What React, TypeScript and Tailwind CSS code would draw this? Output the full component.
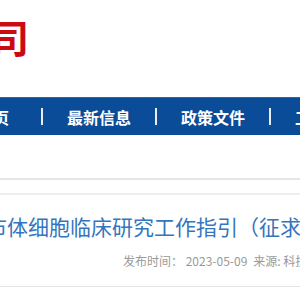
import React from "react";

const navItems = ["首页", "最新信息", "政策文件", "工作动态", "专题专栏"];

const App: React.FC = () => {
  return (
    <div
      className="w-[300px] h-[300px] overflow-hidden bg-white"
      style={{ fontFamily: '"Noto Sans CJK SC", "Noto Sans", sans-serif' }}
    >
      {/* Header */}
      <div className="h-[97px] pt-[12px] whitespace-nowrap">
        <div className="ml-[-10px] text-[39px] leading-[48px] font-bold text-[#cc0a12]">
          司
        </div>
      </div>

      {/* Nav */}
      <div className="h-[38px] bg-[#0b4c98] border-t border-[#2a64a8] flex items-center whitespace-nowrap">
        <div className="ml-[-23px] flex items-center gap-[24px] text-white font-bold text-[16px] leading-none">
          {navItems.map((item, i) => (
            <React.Fragment key={item}>
              {i > 0 && <div className="w-[2px] h-[17px] bg-white/90 shrink-0" />}
              <span className={i === 0 ? "shrink-0 mr-[8px]" : "shrink-0"}>{item}</span>
            </React.Fragment>
          ))}
        </div>
      </div>

      {/* Breadcrumb area */}
      <div className="h-[45px] border-b-2 border-[#e6e6e6]" />
      <div className="h-[13px]" />

      {/* Article */}
      <div className="border-t-2 border-[#eeeeee]">
        <div className="pt-[18px] whitespace-nowrap ml-[-56px] text-[21px] leading-[27px] text-[#3575bd]">
          上海市体细胞临床研究工作指引（征求意见稿）
        </div>
        <div className="mt-[13px] ml-[123px] whitespace-nowrap text-[12px] leading-[16px] text-[#999999] flex gap-[6px]">
          <span>发布时间： 2023-05-09</span>
          <span>来源: 科技部</span>
        </div>
        <div className="mt-[17px] border-b border-[#e5e5e5]" />
      </div>
    </div>
  );
};

export default App;
